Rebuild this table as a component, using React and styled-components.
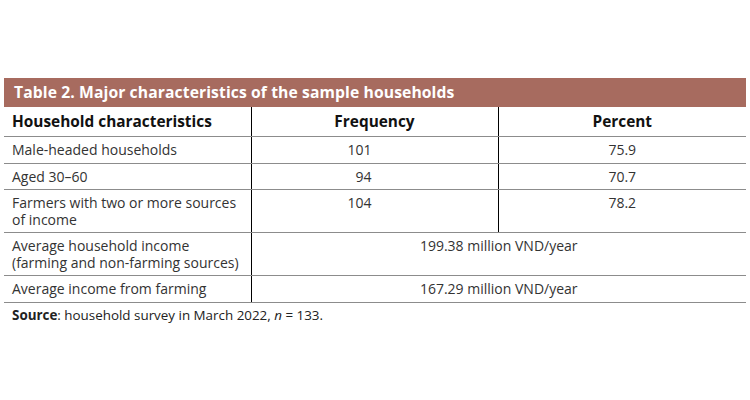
import styled, { createGlobalStyle } from 'styled-components'

const GlobalStyle = createGlobalStyle`
	html, body {
		margin: 0;
		background: #fff;
	}
	body {
		font-family: 'Open Sans', 'Liberation Sans', sans-serif;
	}
`

const rows = [
	{ label: 'Male-headed households', freq: '101', pct: '75.9' },
	{ label: 'Aged 30–60', freq: '94', pct: '70.7' },
	{ label: 'Farmers with two or more sources of income', freq: '104', pct: '78.2' },
]

const merged = [
	{ label: 'Average household income (farming and non-farming sources)', value: '199.38 million VND/year' },
	{ label: 'Average income from farming', value: '167.29 million VND/year' },
]

const App = () => {
	return (
		<>
			<GlobalStyle />
			<Page>
				<Caption>Table 2. Major characteristics of the sample households</Caption>
				<Table>
					<colgroup>
						<col style={{ width: 247 }} />
						<col style={{ width: 247 }} />
						<col style={{ width: 248 }} />
					</colgroup>
					<thead>
						<tr>
							<Head $align='left'>Household characteristics</Head>
							<Head $divider>Frequency</Head>
							<Head $divider>Percent</Head>
						</tr>
					</thead>
					<tbody>
						{rows.map(row => (
							<tr key={row.label}>
								<Cell $align='left'>{row.label}</Cell>
								<Cell $divider $align='right' $padRight={126}>
									{row.freq}
								</Cell>
								<Cell $divider>{row.pct}</Cell>
							</tr>
						))}
						{merged.map(row => (
							<tr key={row.label}>
								<Cell $align='left'>{row.label}</Cell>
								<Cell $divider colSpan={2}>
									{row.value}
								</Cell>
							</tr>
						))}
					</tbody>
				</Table>
				<Note>
					<strong>Source</strong>: household survey in March 2022, <em>n</em> = 133.
				</Note>
			</Page>
		</>
	)
}
export default App

const Page = styled.main`
	padding: 78px 0 0 4px;
	width: 742px;
`

const Caption = styled.div`
	height: 29px;
	line-height: 29px;
	padding-left: 10px;
	background-color: #a76b5f;
	color: #fff;
	font-size: 15.7px;
	font-weight: 700;
	letter-spacing: 0.1px;
	white-space: nowrap;
`

const Table = styled.table`
	width: 742px;
	border-collapse: collapse;
	table-layout: fixed;
`

const Head = styled.th`
	padding: 5px 8px 4px;
	line-height: 20px;
	font-size: 15.4px;
	font-weight: 700;
	color: #111;
	text-align: ${({ $align }) => $align || 'center'};
	border-bottom: 1.5px solid #8c8c8c;
	border-left: ${({ $divider }) => ($divider ? '1.3px solid #000' : 'none')};
`

const Cell = styled.td`
	padding: 5px ${({ $padRight }) => ($padRight ? `${$padRight}px` : '8px')} 4px 8px;
	line-height: 16.5px;
	font-size: 14px;
	color: #333;
	vertical-align: top;
	text-align: ${({ $align }) => $align || 'center'};
	border-bottom: 1.5px solid #8c8c8c;
	border-left: ${({ $divider }) => ($divider ? '1.3px solid #000' : 'none')};
`

const Note = styled.p`
	margin: 3px 0 0;
	padding-left: 8px;
	font-size: 13.4px;
	line-height: 18px;
	color: #222;

	strong {
		font-weight: 700;
	}
`
